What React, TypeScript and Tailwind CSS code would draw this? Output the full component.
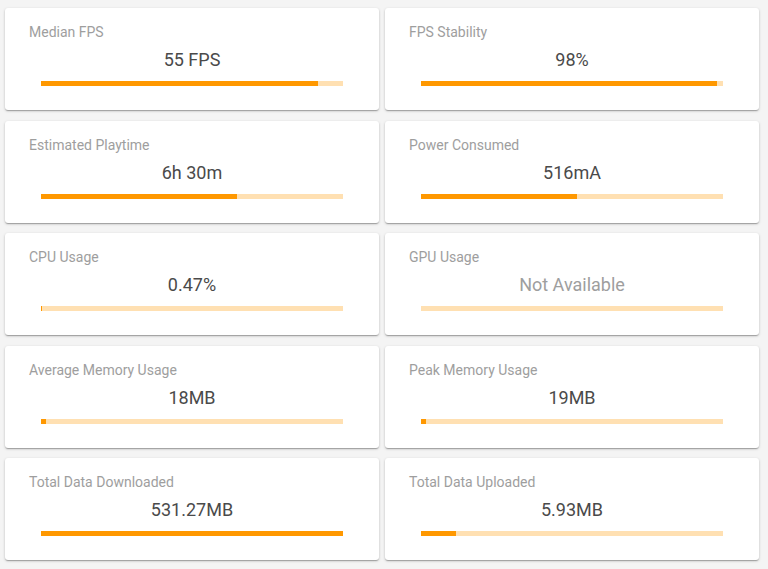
import React from "react";

type Metric = {
  label: string;
  value: string;
  percent: number;
  available?: boolean;
};

const metrics: Metric[] = [
  { label: "Median FPS", value: "55 FPS", percent: 91.7 },
  { label: "FPS Stability", value: "98%", percent: 98 },
  { label: "Estimated Playtime", value: "6h 30m", percent: 65 },
  { label: "Power Consumed", value: "516mA", percent: 51.6 },
  { label: "CPU Usage", value: "0.47%", percent: 0.47 },
  { label: "GPU Usage", value: "Not Available", percent: 0, available: false },
  { label: "Average Memory Usage", value: "18MB", percent: 1.7 },
  { label: "Peak Memory Usage", value: "19MB", percent: 1.7 },
  { label: "Total Data Downloaded", value: "531.27MB", percent: 100 },
  { label: "Total Data Uploaded", value: "5.93MB", percent: 11.5 },
];

const MetricCard = ({ label, value, percent, available = true }: Metric) => (
  <div className="h-[102px] rounded-[3px] bg-white px-6 pt-[14px] shadow-[0_1px_3px_rgba(0,0,0,0.2),0_1px_1px_rgba(0,0,0,0.14),0_2px_1px_-1px_rgba(0,0,0,0.12)]">
    <div className="text-[14px] leading-5 text-[#9e9e9e]">{label}</div>
    <div
      className={`mt-1 text-center text-[18px] leading-7 ${
        available ? "text-[#4a4a4a]" : "text-[#9e9e9e]"
      }`}
    >
      {value}
    </div>
    {/* 진행 막대 */}
    <div className="mx-3 mt-[7px] h-[5px] bg-[#ffe0b2]">
      <div className="h-full bg-[#ff9800]" style={{ width: `${percent}%` }} />
    </div>
  </div>
);

export default function App() {
  return (
    <div
      className="min-h-[569px] w-full bg-[#f4f4f4] pl-[5px] pt-[8px]"
      style={{ fontFamily: "Roboto, 'Noto Sans', sans-serif" }}
    >
      <div className="grid w-[754px] grid-cols-2 gap-x-[6px] gap-y-[10.5px]">
        {metrics.map((m) => (
          <MetricCard key={m.label} {...m} />
        ))}
      </div>
    </div>
  );
}
